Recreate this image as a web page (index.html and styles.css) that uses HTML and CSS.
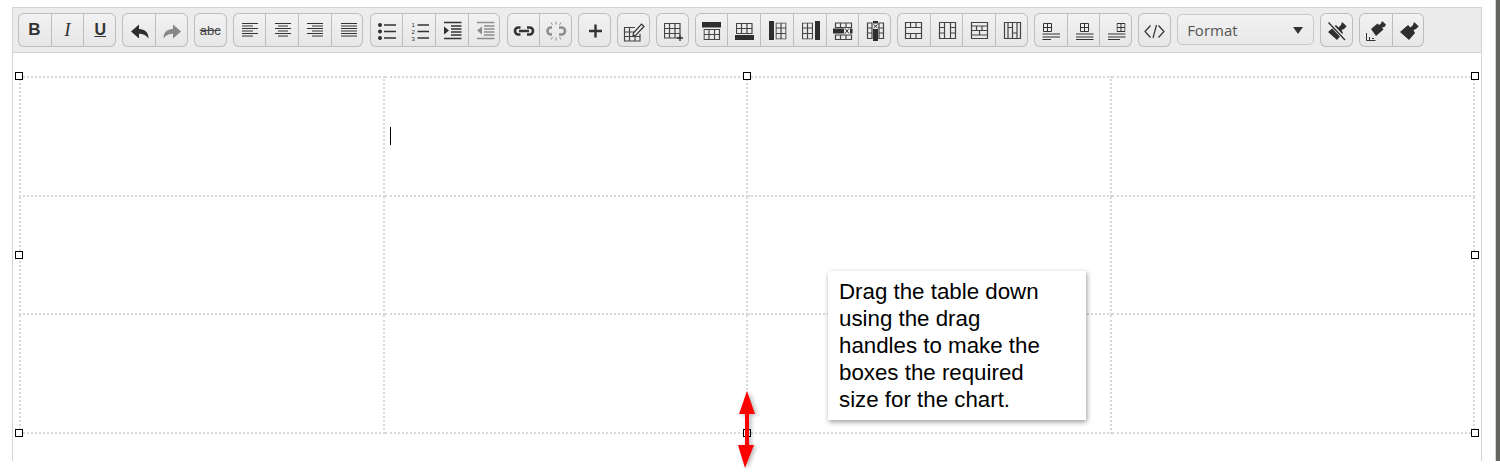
FILE: index.html
```html
<!DOCTYPE html>
<html lang="en">
<head>
    <meta charset="UTF-8">
    <title>Table editor</title>
    <link rel="stylesheet" href="styles.css">
</head>
<body>
    <div class="editor">
        <div class="toolbar">
            <div class="group">
                <button class="btn txt-bold">B</button>
                <button class="btn txt-italic">I</button>
                <button class="btn txt-under">U</button>
            </div>
            <div class="group">
                <button class="btn"><svg viewBox="0 0 33 33"><path class="fill" d="M9 17.500 17 10.500V15C23 15 26.500 18.500 26.500 24.500 24 21 21 19.800 17 19.800V24.500Z"/></svg></button>
                <button class="btn"><svg viewBox="0 0 33 33"><path class="fill off" d="M25 17.500 17 10.500V15C11 15 7.500 18.500 7.500 24.500 10 21 13 19.800 17 19.800V24.500Z"/></svg></button>
            </div>
            <div class="group">
                <button class="btn txt-strike">abc</button>
            </div>
            <div class="group">
                <button class="btn"><svg viewBox="0 0 33 33"><path class="line" d="M9 9.500H25M9 12H20M9 14.500H25M9 17H20M9 19.500H25M9 22H20"/></svg></button>
                <button class="btn"><svg viewBox="0 0 33 33"><path class="line" d="M9 9.500H25M12 12H22M9 14.500H25M12 17H22M9 19.500H25M12 22H22"/></svg></button>
                <button class="btn"><svg viewBox="0 0 33 33"><path class="line" d="M8 9.500H24M13 12H24M8 14.500H24M13 17H24M8 19.500H24M13 22H24"/></svg></button>
                <button class="btn"><svg viewBox="0 0 33 33"><path class="line" d="M9 9.500H25M9 12H25M9 14.500H25M9 17H25M9 19.500H25M9 22H25"/></svg></button>
            </div>
            <div class="group">
                <button class="btn"><svg viewBox="0 0 33 33"><circle class="fill" cx="10" cy="11" r="2"/><circle class="fill" cx="10" cy="17.500" r="2"/><circle class="fill" cx="10" cy="24" r="2"/><path class="line thick" d="M14 11H26M14 17.500H26M14 24H26"/></svg></button>
                <button class="btn"><svg viewBox="0 0 33 33"><text class="num" x="8.500" y="13">1</text><text class="num" x="8.500" y="20">2</text><text class="num" x="8.500" y="27">3</text><path class="line thick" d="M14.500 11H26M14.500 17.500H26M14.500 24H26"/></svg></button>
                <button class="btn"><svg viewBox="0 0 33 33"><path class="fill" d="M8 12.500 13 16.500 8 20.500Z"/><path class="line thick" d="M8 8.500H25.500M15 12H25.500M15 15H25.500M15 18H25.500M15 21H25.500M8 24.500H25.500"/></svg></button>
                <button class="btn"><svg viewBox="0 0 33 33" class="dim"><path class="fill" d="M13 12.500 8 16.500 13 20.500Z"/><path class="line thick" d="M8 8.500H25.500M15 12H25.500M15 15H25.500M15 18H25.500M15 21H25.500M8 24.500H25.500"/></svg></button>
            </div>
            <div class="group">
                <button class="btn"><svg viewBox="0 0 33 33"><path class="line chain" d="M13.500 13.500H11.500A3.500 3.500 0 0 0 11.500 20.500H13.500M20 13.500H22.500A3.500 3.500 0 0 1 22.500 20.500H20M12 17H22"/></svg></button>
                <button class="btn"><svg viewBox="0 0 33 33" class="dim"><path class="line chain" d="M12 13.500H11A3.500 3.500 0 0 0 11 20.500H12M19 13.500H21.500A3.500 3.500 0 0 1 21.500 20.500H19"/><path class="line" d="M16 7.500V10.500M11 8.500 12.500 11M21 8.500 19.500 11M16 23.500V26.500M11 25.500 12.500 23M21 25.500 19.500 23"/></svg></button>
            </div>
            <div class="group">
                <button class="btn"><svg viewBox="0 0 33 33"><path class="line plus" d="M17.500 10.500V23.500M11 17H24"/></svg></button>
            </div>
            <div class="group">
                <button class="btn"><svg viewBox="0 0 33 33"><path class="line thin" d="M18 13.500H7.500V27H23V20M7.500 18H17M7.500 22.500H23M12.500 14V27M18 20V27"/><path class="pencil" d="M16.500 19 24.500 10 27 12.500 19 21 16 22Z"/></svg></button>
            </div>
            <div class="group">
                <button class="btn"><svg viewBox="0 0 33 33"><use href="#grid" x="8" y="9"/><path class="line thick" d="M24 21V27M21 24H27"/></svg></button>
            </div>
            <div class="group">
                <button class="btn"><svg viewBox="0 0 33 33"><rect class="fill" x="7" y="8" width="19" height="5.500"/><use href="#grid-wide" x="8.500" y="15"/></svg></button>
                <button class="btn"><svg viewBox="0 0 33 33"><use href="#grid-wide" x="8" y="9"/><rect class="fill" x="7" y="21" width="19" height="5"/></svg></button>
                <button class="btn"><svg viewBox="0 0 33 33"><rect class="fill" x="8" y="7" width="5" height="19"/><use href="#grid-tall" x="14.500" y="8.500"/></svg></button>
                <button class="btn"><svg viewBox="0 0 33 33"><use href="#grid-tall" x="8" y="8.500"/><rect class="fill" x="21" y="7" width="5" height="19"/></svg></button>
                <button class="btn"><svg viewBox="0 0 33 33"><path class="line thin" d="M8.500 9H24.500V13.500H8.500ZM13.500 9V13.500M19 9V13.500M8.500 21H24.500V25.500H8.500ZM13.500 21V25.500M19 21V25.500"/><rect class="fill" x="6" y="14.500" width="11" height="5"/><rect class="fill" x="23" y="14.500" width="2.500" height="5"/><path class="line" d="M18 14.500 22 19.500M22 14.500 18 19.500"/></svg></button>
                <button class="btn"><svg viewBox="0 0 33 33"><path class="line thin" d="M8.500 9H13V24.500H8.500ZM8.500 14H13M8.500 19H13M20 9H24.500V24.500H20ZM20 14H24.500M20 19H24.500"/><rect class="fill" x="14" y="15" width="5" height="12"/><rect class="fill" x="14" y="7" width="5" height="2.500"/><path class="line" d="M14.500 10.500 18.500 14M18.500 10.500 14.500 14"/></svg></button>
            </div>
            <div class="group">
                <button class="btn"><svg viewBox="0 0 33 33"><path class="line thin" d="M8.500 8.500H24.500V24.500H8.500ZM8.500 13.500H24.500M8.500 19.500H24.500M13.500 8.500V13.500M19 8.500V13.500M13.500 19.500V24.500M19 19.500V24.500"/></svg></button>
                <button class="btn"><svg viewBox="0 0 33 33"><path class="line thin" d="M8.500 8.500H24.500V24.500H8.500ZM13.500 8.500V24.500M19.500 8.500V24.500M8.500 13.500H13.500M8.500 19H13.500M19.500 13.500H24.500M19.500 19H24.500"/></svg></button>
                <button class="btn"><svg viewBox="0 0 33 33"><path class="line thin" d="M8.500 8.500H24.500V24.500H8.500ZM8.500 12H24.500M8.500 16.500H24.500M8.500 21H24.500M13.500 12V16.500M19 12V16.500M16.500 16.500V21"/></svg></button>
                <button class="btn"><svg viewBox="0 0 33 33"><path class="line thin" d="M8.500 8.500H24.500V24.500H8.500ZM12 8.500V24.500M21 8.500V24.500M16.500 8.500V24.500M12 13.500H16.500M16.500 19H21"/></svg></button>
            </div>
            <div class="group">
                <button class="btn"><svg viewBox="0 0 33 33"><use href="#grid-small" x="9" y="9"/><path class="line wide" d="M8.500 20H26M8.500 23H26M8.500 25.500H17"/></svg></button>
                <button class="btn"><svg viewBox="0 0 33 33"><use href="#grid-small" x="12" y="9"/><path class="line wide" d="M8 20H25.500M8 23H25.500M8 25.500H25.500"/></svg></button>
                <button class="btn"><svg viewBox="0 0 33 33"><use href="#grid-small" x="16.500" y="9"/><path class="line wide" d="M8 20H25.500M8 23H25.500M8 25.500H20"/></svg></button>
            </div>
            <div class="group">
                <button class="btn"><svg viewBox="0 0 33 33"><path class="line code" d="M12.500 11.500 7 17.500 12.500 23.500M18.500 11 15 24M20.500 11.500 26 17.500 20.500 23.500"/></svg></button>
            </div>
            <div class="select">
                <span>Format</span>
                <span class="caret"></span>
            </div>
            <div class="group">
                <button class="btn"><svg viewBox="0 0 33 33"><path class="fill" d="M8 18 16 11 18.500 13.500 21 11 22 8 26.700 12.300 24 15 21.500 16 23 19 17 26Z"/><path class="halo" d="M8 7.500 26 26.500"/><path class="line thick" d="M8.500 8.500 25 26"/></svg></button>
            </div>
            <div class="group">
                <button class="btn"><svg viewBox="0 0 33 33"><path class="fill" d="M12 15 18.500 9.500 20 11 22 9.500 23 7 27 10.500 25.500 13 23 13.500 24.500 15.500 17 22Z"/><path class="line" d="M7.500 19V26.500H16.500M10.500 23V26.500M13 24.500H15"/></svg></button>
                <button class="btn"><svg viewBox="0 0 33 33"><path class="fill" d="M7 18 15 11 17.500 13.500 20 11 21 8 25.700 12.300 23 15 20.500 16 22 19 16 26Z"/></svg></button>
            </div>
        </div>
        <div class="content">
            <table class="grid-table">
                <tr class="row-a"><td></td><td><span class="caret-line"></span></td><td></td><td></td></tr>
                <tr class="row-b"><td></td><td></td><td></td><td></td></tr>
                <tr class="row-a"><td></td><td></td><td></td><td></td></tr>
            </table>
            <!-- drag handles -->
            <span class="handle h-tl"></span>
            <span class="handle h-tc"></span>
            <span class="handle h-tr"></span>
            <span class="handle h-ml"></span>
            <span class="handle h-mr"></span>
            <span class="handle h-bl"></span>
            <span class="handle h-bc"></span>
            <span class="handle h-br"></span>
            <svg class="arrow" viewBox="0 0 30 90"><path d="M12 0 20 23H14V54H19L10 77 3 54H10V23H4Z"/></svg>
            <div class="callout">Drag the table down using the drag handles to make the boxes the required size for the chart.</div>
        </div>
    </div>
    <div class="edge"></div>

    <!-- shared table glyphs -->
    <svg class="defs">
        <symbol id="grid" width="17" height="16" viewBox="0 0 17 16"><path class="line thin" d="M.5.5H16V15H.5ZM.5 5.500H16M.5 10.500H16M5.500.5V15M11 .5V15"/></symbol>
        <symbol id="grid-wide" width="17" height="11" viewBox="0 0 17 11"><path class="line thin" d="M.5.5H16V10.500H.5ZM.5 5.500H16M5.500.5V10.500M11 .5V10.500"/></symbol>
        <symbol id="grid-tall" width="11" height="17" viewBox="0 0 11 17"><path class="line thin" d="M.5.5H10.500V16.500H.5ZM.5 5.500H10.500M.5 11H10.500M5.500.5V16.500"/></symbol>
        <symbol id="grid-small" width="9" height="9" viewBox="0 0 9 9"><path class="line" d="M.5.5H8.500V8.500H.5ZM.5 4.500H8.500M4.500.5V8.500"/></symbol>
    </svg>
</body>
</html>
```

FILE: styles.css
```css
html, body {
    margin: 0;
    height: 473px;
    overflow: hidden;
    background-color: #ffffff;
}
body {
    position: relative;
    font-family: "Liberation Sans", Arial, sans-serif;
    color: #333;
}
.editor {
    margin: 7px 0 0 12px;
    width: 1470px;
    height: 454px;
    box-sizing: border-box;
    border: 2px solid #d4d4d4;
    border-width: 1px 1px 0 1px;
}
.toolbar {
    display: flex;
    gap: 6.2px;
    height: 45px;
    box-sizing: border-box;
    padding: 5px 0 0 5px;
    background-color: #ececec;
    border-bottom: 1px solid #d4d4d4;
}
.group {
    display: flex;
    height: 34px;
    border-radius: 6px;
    box-shadow: inset 0 0 0 1px #bdbdbd;
    background-image: linear-gradient(#f2f2f2, #e6e6e6);
}
.btn {
    display: block;
    width: 32.7px;
    height: 34px;
    padding: 0;
    border: 0;
    background: none;
    color: #333;
    font-family: "Liberation Sans", Arial, sans-serif;
}
.btn + .btn {
    border-left: 1px solid #bdbdbd;
}
.btn svg {
    display: block;
    width: 33px;
    height: 33px;
}
.txt-bold {
    font-size: 17px;
    font-weight: bold;
}
.txt-italic {
    font-family: "Liberation Serif", serif;
    font-size: 19px;
    font-style: italic;
}
.txt-under {
    font-size: 16px;
    font-weight: bold;
    text-decoration: underline;
}
.txt-strike {
    font-size: 13px;
    color: #444;
    text-decoration: line-through;
}
.select {
    display: flex;
    justify-content: space-between;
    align-items: center;
    width: 136.7px;
    height: 31px;
    margin-top: 1px;
    box-sizing: border-box;
    padding: 0 10px 0 9px;
    border: 1px solid #c8c8c8;
    border-radius: 5px;
    font-family: "Open Sans", sans-serif;
    font-size: 15px;
    color: #555;
    background-image: linear-gradient(#f2f2f2, #e8e8e8);
}
.caret {
    width: 0;
    height: 0;
    margin-top: 2px;
    border-style: solid;
    border-width: 7px 5px 0 5px;
    border-color: #333 transparent transparent transparent;
}
.fill {
    fill: #2e2e2e;
}
.fill.off {
    fill: #868686;
}
.line {
    fill: none;
    stroke: #333;
    stroke-width: 1;
}
.line.thick {
    stroke-width: 1.4;
}
.line.thin {
    stroke: #444;
    stroke-width: 1.2;
}
.line.wide {
    stroke-width: 1.1;
}
.line.chain {
    stroke-width: 2.6;
}
.line.plus {
    stroke-width: 2.4;
}
.line.code {
    stroke-width: 1.2;
}
.pencil {
    fill: #ececec;
    stroke: #333;
    stroke-width: 1.2;
}
.halo {
    fill: none;
    stroke: #ececec;
    stroke-width: 3.4;
}
.num {
    font-size: 6px;
    font-family: "Liberation Sans", sans-serif;
    fill: #333;
}
.dim {
    opacity: 0.5;
}
.defs {
    display: none;
}
.content {
    position: relative;
    height: 408px;
}
.grid-table {
    position: absolute;
    left: 6px;
    top: 23px;
    width: 1456px;
    border-collapse: collapse;
    table-layout: fixed;
}
.grid-table td {
    box-sizing: content-box;
    border: 2px dotted #d8d8d8;
    padding: 0;
    vertical-align: top;
}
.row-a td {
    height: 117px;
}
.row-b td {
    height: 116px;
}
.caret-line {
    display: block;
    width: 1px;
    height: 18px;
    margin: 49px 0 0 5px;
    background-color: #000;
}
.handle {
    position: absolute;
    width: 8px;
    height: 8px;
    box-sizing: border-box;
    border: 1px solid #000;
    background-color: #fff;
}
.h-tl { left: 2px; top: 19px; }
.h-tc { left: 730px; top: 19px; }
.h-tr { left: 1458px; top: 19px; }
.h-ml { left: 2px; top: 198px; }
.h-mr { left: 1458px; top: 198px; }
.h-bl { left: 2px; top: 376px; }
.h-bc { left: 730px; top: 376px; }
.h-br { left: 1458px; top: 376px; }
.arrow {
    position: absolute;
    left: 722px;
    top: 338px;
    width: 30px;
    height: 90px;
    overflow: visible;
    filter: drop-shadow(2px 1px 2px rgba(0, 0, 0, 0.3));
}
.arrow path {
    fill: #ff0000;
}
.callout {
    position: absolute;
    left: 815px;
    top: 218px;
    width: 258px;
    height: 149px;
    box-sizing: border-box;
    padding: 7px 40px 0 11px;
    background-color: #fff;
    box-shadow: 1px 2px 5px rgba(0, 0, 0, 0.4);
    font-size: 22.3px;
    line-height: 27px;
    color: #000;
}
.edge {
    position: absolute;
    right: 0;
    top: 0;
    width: 4px;
    height: 461px;
    border-left: 1px solid #d4d4d4;
    background-color: #666660;
}
```
